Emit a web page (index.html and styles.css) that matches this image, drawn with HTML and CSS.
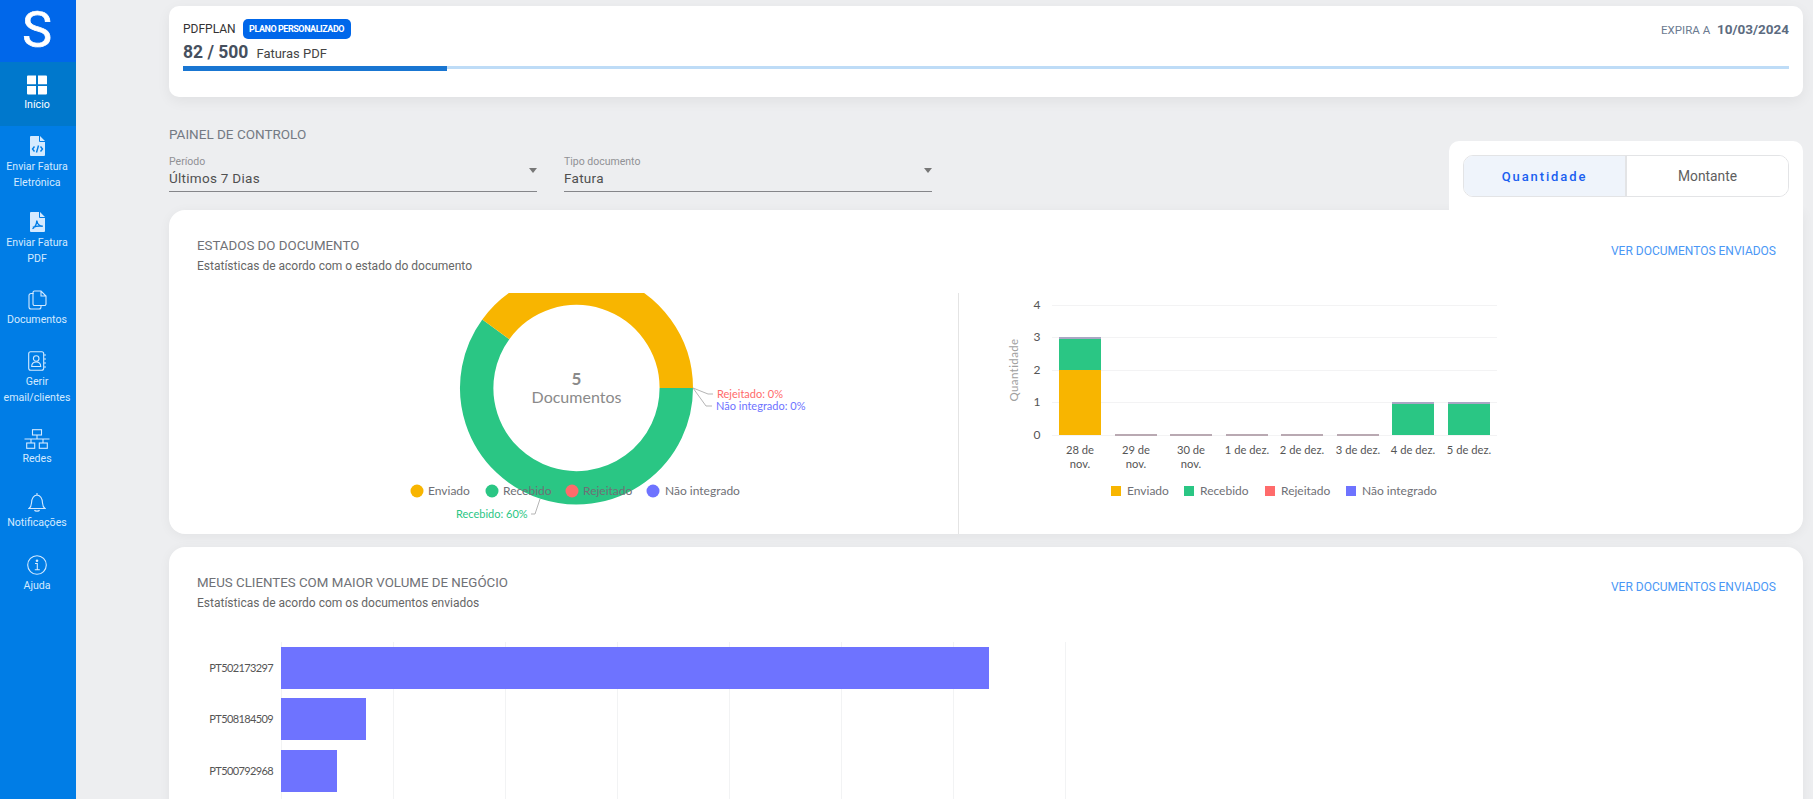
FILE: index.html
```html
<!DOCTYPE html>
<html lang="pt">
<head>
<meta charset="utf-8">
<title>Painel de Controlo</title>
<link rel="stylesheet" href="styles.css">
</head>
<body>
<div class="app">
  <aside class="sidebar">
    <div class="logo">S</div>
    <nav class="nav">
      <a class="nav-item active">
        <svg class="icon" width="22" height="20" viewBox="0 0 22 20"><path class="solid" d="M1 1.500a1 1 0 0 1 1-1h8v8.700H1zM12 .5h8a1 1 0 0 1 1 1v7.700h-9zM1 11h9v8.500H2a1 1 0 0 1-1-1zM12 11h9v7.500a1 1 0 0 1-1 1h-8z"/></svg>
        <span>Início</span>
      </a>
      <a class="nav-item">
        <svg class="icon" width="15" height="20" viewBox="0 0 15 20"><path class="solid" d="M0 1a1 1 0 0 1 1-1h8v5a1 1 0 0 0 1 1h5v13a1 1 0 0 1-1 1H1a1 1 0 0 1-1-1zM10 0l5 5h-5z"/><path class="cut" d="M4.500 10.500 2.500 13l2 2.500M10.500 10.500l2 2.500-2 2.500M8.500 9.500 6.500 16.500"/></svg>
        <span>Enviar Fatura Eletrónica</span>
      </a>
      <a class="nav-item">
        <svg class="icon" width="15" height="20" viewBox="0 0 15 20"><path class="solid" d="M0 1a1 1 0 0 1 1-1h8v5a1 1 0 0 0 1 1h5v13a1 1 0 0 1-1 1H1a1 1 0 0 1-1-1zM10 0l5 5h-5z"/><path class="cut" d="M6.800 8.500c0 3-1.800 6.500-4.300 8.300M6.800 8.500c.4 3 2.500 5.500 6 5.800M2.800 15.500c3-1.500 6-1.800 10-1.300"/></svg>
        <span>Enviar Fatura PDF</span>
      </a>
      <a class="nav-item">
        <svg class="icon" width="19" height="20" viewBox="0 0 19 20"><path class="line" d="M5.500 3.500H3a2 2 0 0 0-2 2V17a2 2 0 0 0 2 2h8a2 2 0 0 0 2-2v-1.500"/><path class="line" d="M6.500 1H13l5 5v8a1.500 1.500 0 0 1-1.500 1.500h-10A1.500 1.500 0 0 1 5 14V2.500A1.500 1.500 0 0 1 6.500 1zM13 1v5h5"/></svg>
        <span>Documentos</span>
      </a>
      <a class="nav-item">
        <svg class="icon" width="18" height="20" viewBox="0 0 18 20"><rect class="line" x=".7" y=".7" width="15" height="18.600" rx="2"/><circle class="line" cx="8.200" cy="7.500" r="2.800"/><path class="line" d="M3.700 15.500c0-3 2-4.500 4.500-4.500s4.500 1.500 4.500 4.500zM16 4h2M16 8h2M16 12h2M16 16h2"/></svg>
        <span>Gerir email/clientes</span>
      </a>
      <a class="nav-item">
        <svg class="icon" width="26" height="20" viewBox="0 0 26 20"><rect class="line" x="8.500" y=".7" width="9" height="5.300"/><path class="line" d="M13 6v4M.5 10h25M7 10v4M19 10v4"/><rect class="line" x="2.700" y="14" width="8" height="5.300"/><rect class="line" x="15.300" y="14" width="8" height="5.300"/></svg>
        <span>Redes</span>
      </a>
      <a class="nav-item">
        <svg class="icon" width="18" height="20" viewBox="0 0 18 20"><path class="line" d="M1 16.500c1.500-1 2.300-2.500 2.500-5.500.2-4 2-7.500 5.500-8 3.500.5 5.300 4 5.500 8 .2 3 1 4.500 2.500 5.500zM9 3V1M6.500 18c.5 1.500 4.500 1.500 5 0"/></svg>
        <span>Notificações</span>
      </a>
      <a class="nav-item">
        <svg class="icon" width="20" height="20" viewBox="0 0 20 20"><circle class="line" cx="10" cy="10" r="9.300"/><circle class="solid" cx="10" cy="5.700" r="1.300"/><path class="line" d="M8 8.500h2.300V14.800M7.800 14.800h5"/></svg>
        <span>Ajuda</span>
      </a>
    </nav>
  </aside>

  <main class="main">
    <section class="plan-card">
      <div class="plan-top">
        <div class="plan-info">
          <div class="plan-name"><span>PDFPLAN</span><span class="badge">PLANO PERSONALIZADO</span></div>
          <div class="plan-count"><strong>82 / 500</strong><span>Faturas PDF</span></div>
        </div>
        <div class="expiry">EXPIRA A <strong>10/03/2024</strong></div>
      </div>
      <div class="progress"><div class="progress-fill"></div></div>
    </section>

    <section class="controls">
      <div class="filters">
        <h2 class="panel-title">PAINEL DE CONTROLO</h2>
        <div class="selects">
          <div class="select">
            <label>Período</label>
            <div class="select-value">Últimos 7 Dias</div>
            <i class="arrow"></i>
          </div>
          <div class="select">
            <label>Tipo documento</label>
            <div class="select-value">Fatura</div>
            <i class="arrow"></i>
          </div>
        </div>
      </div>
      <div class="toggle-card">
        <div class="toggle">
          <button class="toggle-btn on">Quantidade</button>
          <button class="toggle-btn">Montante</button>
        </div>
      </div>
    </section>

    <section class="card states-card">
      <header class="card-head">
        <div>
          <h3>ESTADOS DO DOCUMENTO</h3>
          <p>Estatísticas de acordo com o estado do documento</p>
        </div>
        <a class="card-link">VER DOCUMENTOS ENVIADOS</a>
      </header>
      <div class="chart-row">
        <svg class="chart-left" viewBox="169 293 789 241">
          <path class="arc" stroke="#2ac684" d="M676.300 388A99.800 99.800 0 1 1 495.800 329.300"/>
          <path class="arc" stroke="#f8b500" d="M495.800 329.300A99.800 99.800 0 0 1 676.300 388"/>
          <text class="center-num" x="576.500" y="385" text-anchor="middle">5</text>
          <text class="center-txt" x="576.500" y="403" text-anchor="middle">Documentos</text>
          <path class="leader" d="M693 388 708 394H713M693 388 706 406H712M540 499 535 514H531"/>
          <text class="callout" x="717" y="398" fill="#ff6b6b">Rejeitado: 0%</text>
          <text class="callout" x="716" y="410" fill="#6e73ff">Não integrado: 0%</text>
          <text class="callout" x="456" y="518" fill="#2ac684">Recebido: 60%</text>
          <circle cx="417" cy="491" r="6.500" fill="#f8b500"/>
          <text class="legend" x="428" y="495">Enviado</text>
          <circle cx="492" cy="491" r="6.500" fill="#2ac684"/>
          <text class="legend" x="503" y="495">Recebido</text>
          <circle cx="572" cy="491" r="6.500" fill="#ff6b6b"/>
          <text class="legend" x="583" y="495">Rejeitado</text>
          <circle cx="653" cy="491" r="6.500" fill="#6e73ff"/>
          <text class="legend" x="665" y="495">Não integrado</text>
        </svg>
        <svg class="chart-right" width="844" height="241" viewBox="959 293 844 241">
          <g class="grid">
            <path d="M1052 305.500H1497M1052 337.500H1497M1052 370.500H1497M1052 402.500H1497M1052 435.500H1497"/>
          </g>
          <text class="axis" x="1037" y="309" text-anchor="middle">4</text>
          <text class="axis" x="1037" y="341" text-anchor="middle">3</text>
          <text class="axis" x="1037" y="374" text-anchor="middle">2</text>
          <text class="axis" x="1037" y="406" text-anchor="middle">1</text>
          <text class="axis" x="1037" y="439" text-anchor="middle">0</text>
          <text class="axis-title" transform="translate(1018 370) rotate(-90)" text-anchor="middle">Quantidade</text>

          <rect x="1059" y="370" width="42" height="65" fill="#f8b500"/>
          <rect x="1059" y="338" width="42" height="32" fill="#2ac684"/>
          <rect x="1059" y="337" width="42" height="2" fill="#a9a7c4"/>
          <rect x="1115" y="434" width="42" height="2" fill="#b9a9b2"/>
          <rect x="1170" y="434" width="42" height="2" fill="#b9a9b2"/>
          <rect x="1226" y="434" width="42" height="2" fill="#b9a9b2"/>
          <rect x="1281" y="434" width="42" height="2" fill="#b9a9b2"/>
          <rect x="1337" y="434" width="42" height="2" fill="#b9a9b2"/>
          <rect x="1392" y="403" width="42" height="32" fill="#2ac684"/>
          <rect x="1392" y="402" width="42" height="2" fill="#a9a7c4"/>
          <rect x="1448" y="403" width="42" height="32" fill="#2ac684"/>
          <rect x="1448" y="402" width="42" height="2" fill="#a9a7c4"/>

          <text class="tick" x="1080" y="454" text-anchor="middle">28 de</text>
          <text class="tick" x="1080" y="468" text-anchor="middle">nov.</text>
          <text class="tick" x="1136" y="454" text-anchor="middle">29 de</text>
          <text class="tick" x="1136" y="468" text-anchor="middle">nov.</text>
          <text class="tick" x="1191" y="454" text-anchor="middle">30 de</text>
          <text class="tick" x="1191" y="468" text-anchor="middle">nov.</text>
          <text class="tick" x="1247" y="454" text-anchor="middle">1 de dez.</text>
          <text class="tick" x="1302" y="454" text-anchor="middle">2 de dez.</text>
          <text class="tick" x="1358" y="454" text-anchor="middle">3 de dez.</text>
          <text class="tick" x="1413" y="454" text-anchor="middle">4 de dez.</text>
          <text class="tick" x="1469" y="454" text-anchor="middle">5 de dez.</text>

          <rect x="1111" y="486" width="10" height="10" fill="#f8b500"/>
          <text class="legend" x="1127" y="495">Enviado</text>
          <rect x="1184" y="486" width="10" height="10" fill="#2ac684"/>
          <text class="legend" x="1200" y="495">Recebido</text>
          <rect x="1265" y="486" width="10" height="10" fill="#ff6b6b"/>
          <text class="legend" x="1281" y="495">Rejeitado</text>
          <rect x="1346" y="486" width="10" height="10" fill="#6e73ff"/>
          <text class="legend" x="1362" y="495">Não integrado</text>
        </svg>
      </div>
    </section>

    <section class="card clients-card">
      <header class="card-head">
        <div>
          <h3>MEUS CLIENTES COM MAIOR VOLUME DE NEGÓCIO</h3>
          <p>Estatísticas de acordo com os documentos enviados</p>
        </div>
        <a class="card-link">VER DOCUMENTOS ENVIADOS</a>
      </header>
      <svg class="chart-clients" width="1634" height="170" viewBox="169 642 1634 170">
        <path class="vgrid" d="M281.500 642V812M393.500 642V812M505.500 642V812M617.500 642V812M729.500 642V812M841.500 642V812M953.500 642V812M1065.500 642V812"/>
        <rect x="281" y="647" width="708" height="42" fill="#6e73ff"/>
        <rect x="281" y="698" width="85" height="42" fill="#6e73ff"/>
        <rect x="281" y="750" width="56" height="42" fill="#6e73ff"/>
        <text class="bar-label" x="273" y="672" text-anchor="end">PT502173297</text>
        <text class="bar-label" x="273" y="723" text-anchor="end">PT508184509</text>
        <text class="bar-label" x="273" y="775" text-anchor="end">PT500792968</text>
      </svg>
    </section>
  </main>
</div>
</body>
</html>
```

FILE: styles.css
```css
* { box-sizing: border-box; }
html, body { margin: 0; height: 100%; overflow: hidden; }
body { font-family: Roboto, "Liberation Sans", sans-serif; background: #edeef0; color: #444; }
.app { display: flex; height: 799px; overflow: hidden; }

/* Sidebar */
.sidebar { width: 76px; flex: none; background: #007de6; color: #d4eaff; }
.logo { height: 62px; padding-right: 2px; background: #0067ea; color: #fff; font-size: 50px; font-weight: 400; line-height: 60px; text-align: center; -webkit-text-stroke: .7px #fff; }
.nav { display: flex; flex-direction: column; }
.nav-item { display: flex; flex-direction: column; align-items: center; text-align: center; font-size: 10.600px; line-height: 16px; padding: 10px 2px 13px 0; }
.nav-item .icon { height: 20px; flex: none; margin-bottom: 3px; }
.nav-item span { display: block; padding: 0 4px; }
.nav-item.active { background: #0078cc; color: #fff; padding: 13px 2px 13px 0; }
.nav-item.active .icon { margin-bottom: 2px; }
.nav-item:nth-child(2) { padding-bottom: 11px; }
.nav-item:nth-child(4) { padding-bottom: 13px; }
.nav-item:nth-child(4) .icon, .nav-item:nth-child(6) .icon { margin-bottom: 2px; }
.nav-item:nth-child(6) { padding-bottom: 15px; }
.nav-item:nth-child(7) { padding-bottom: 14px; }
.icon .solid { fill: #d4eaff; }
.active .icon .solid { fill: #fff; }
.icon .cut { fill: none; stroke: #007de6; stroke-width: 1.4; }
.icon .line { fill: none; stroke: #d4eaff; stroke-width: 1.1; }

/* Main */
.main { flex: 1; min-width: 0; padding: 6px 10px 0 93px; }
.plan-card { height: 91px; background: #fff; border-radius: 10px; padding: 0 14px; box-shadow: 0 4px 14px rgba(0,0,0,.06); }
.plan-top { display: flex; justify-content: space-between; height: 60px; }
.plan-name { display: flex; align-items: center; gap: 7px; height: 20px; margin-top: 13px; font-size: 12px; color: #333; }
.badge { display: block; width: 108px; height: 20px; line-height: 20px; border-radius: 5px; background: #0067ea; color: #fff; font-size: 9px; font-weight: 700; letter-spacing: -.45px; text-align: center; }
.plan-count { display: flex; align-items: baseline; gap: 8px; margin-top: 1px; font-size: 13px; line-height: 24px; color: #444; }
.plan-count strong { font-size: 17.500px; font-weight: 700; color: #46505e; }
.expiry { margin-top: 14px; font-size: 11.500px; line-height: 18px; color: #6b7a90; }
.expiry strong { margin-left: 4px; font-size: 13.500px; font-weight: 700; color: #5c6b80; }
.progress { height: 3px; background: #bedcf7; }
.progress-fill { width: 264px; height: 5px; background: #1976d2; }

/* Controls */
.controls { display: flex; justify-content: space-between; align-items: flex-end; height: 113px; }
.panel-title { margin: 0 0 10px; font-size: 13.500px; font-weight: 400; line-height: 20px; color: #747a84; }
.selects { display: flex; gap: 27px; padding-bottom: 18px; }
.select { position: relative; width: 368px; height: 38px; border-bottom: 1px solid #85868a; }
.select label { display: block; padding-top: 1px; font-size: 10.500px; line-height: 14px; color: #909195; }
.select-value { margin-top: -1px; font-size: 13.500px; line-height: 20px; letter-spacing: .28px; color: #505050; }
.arrow { position: absolute; right: 0; top: 14px; width: 0; height: 0; border: 4.500px solid transparent; border-top: 5px solid #777; border-bottom: 0; }
.toggle-card { width: 354px; height: 69px; padding: 14px 14px 0; background: #fff; border-radius: 10px 10px 0 0; }
.toggle { display: flex; height: 42px; border: 1px solid #e3e4e6; border-radius: 10px; overflow: hidden; }
.toggle-btn { flex: 1; border: 0; background: #fff; font: 400 13.800px Roboto, sans-serif; color: #5e5e5e; }
.toggle-btn.on { background: #eff4fb; color: #1a5ff0; font-size: 13px; font-weight: 500; letter-spacing: 1.900px; border-right: 2px solid #e3e4e6; }

/* Cards */
.card { background: #fff; border-radius: 16px; box-shadow: 0 2px 12px rgba(0,0,0,.05); }
.states-card { height: 324px; border-top-right-radius: 0; }
.clients-card { margin-top: 13px; height: 320px; }
.card-head { display: flex; justify-content: space-between; padding: 27px 27px 0 28px; height: 83px; }
.card-head h3 { margin: 0; font-size: 13.300px; line-height: 18px; font-weight: 400; color: #6f7176; }
.card-head p { margin: 3px 0 0; font-size: 12px; line-height: 16px; color: #666; }
.card-link { margin-top: 6px; font-size: 12px; line-height: 16px; color: #4a97f5; }
.chart-row { display: flex; height: 241px; }
.chart-left { display: block; flex: none; width: 790px; height: 241px; border-right: 1px solid #e4e4e4; }
.chart-right { display: block; flex: none; }
.clients-card .card-head { height: 95px; }
.clients-card .card-link { margin-top: 5px; }
.chart-clients { display: block; }

/* Chart text */
.arc { fill: none; stroke-width: 33.400; }
.leader { fill: none; stroke: #b5b5b5; stroke-width: 1; }
.center-num { font: 700 17px Lato, sans-serif; fill: #8a8a8a; }
.center-txt { font: 400 16px Lato, sans-serif; fill: #8a8a8a; }
.callout { font: 400 11px Lato, sans-serif; }
.legend { font: 400 12px Lato, sans-serif; fill: #6f7076; }
.grid path { fill: none; stroke: #f3f3f4; stroke-width: 1; }
.axis { font: 400 12px Lato, sans-serif; fill: #555; }
.axis-title { font: 400 11.500px Lato, sans-serif; fill: #a0a0a0; letter-spacing: .4px; }
.tick { font: 400 11.200px Lato, sans-serif; fill: #555; }
.vgrid { fill: none; stroke: #f2f3f4; stroke-width: 1; }
.bar-label { font: 400 11px Lato, sans-serif; fill: #555; letter-spacing: -.62px; }
```
